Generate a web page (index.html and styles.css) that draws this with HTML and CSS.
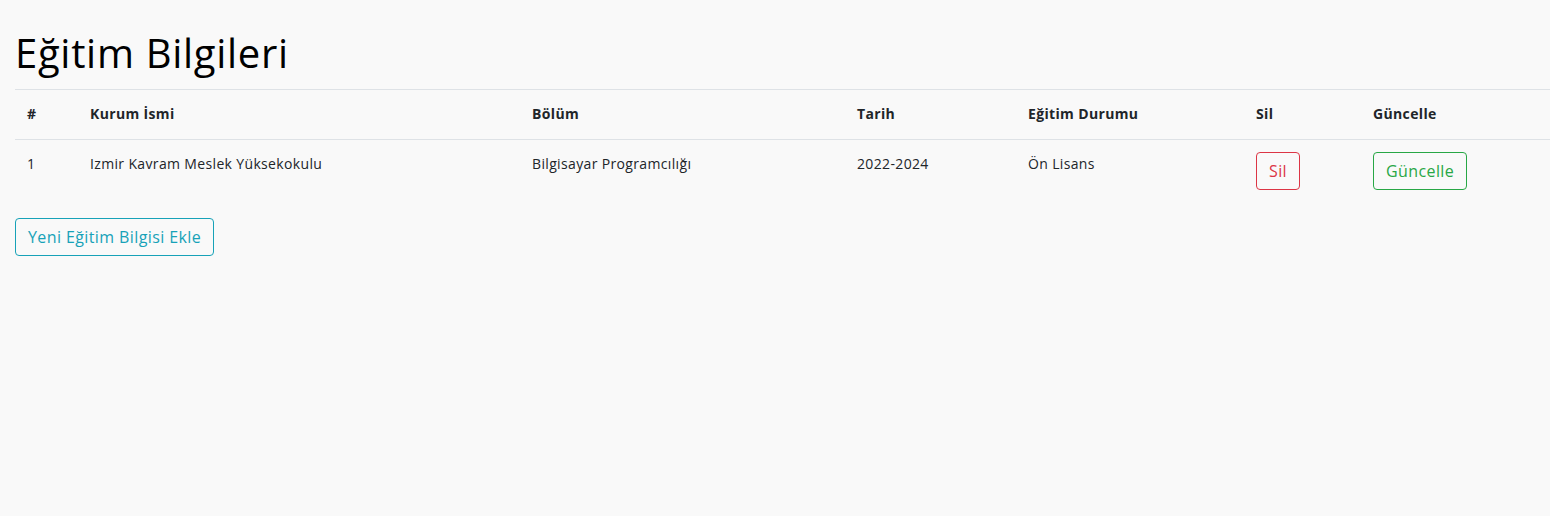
FILE: index.html
```html
<!DOCTYPE html>
<html lang="tr">
<head>
<meta charset="utf-8">
<title>Eğitim Bilgileri</title>
<link rel="stylesheet" href="styles.css">
</head>
<body>
<div class="container">
  <h1 class="title">Eğitim Bilgileri</h1>
  <table class="table">
    <colgroup>
      <col class="c1"><col class="c2"><col class="c3"><col class="c4"><col class="c5"><col class="c6"><col class="c7">
    </colgroup>
    <thead>
      <tr>
        <th>#</th>
        <th>Kurum İsmi</th>
        <th>Bölüm</th>
        <th>Tarih</th>
        <th>Eğitim Durumu</th>
        <th>Sil</th>
        <th>Güncelle</th>
      </tr>
    </thead>
    <tbody>
      <tr>
        <td>1</td>
        <td>Izmir Kavram Meslek Yüksekokulu</td>
        <td>Bilgisayar Programcılığı</td>
        <td>2022-2024</td>
        <td>Ön Lisans</td>
        <td><button class="btn btn-danger">Sil</button></td>
        <td><button class="btn btn-success">Güncelle</button></td>
      </tr>
    </tbody>
  </table>
  <button class="btn btn-info">Yeni Eğitim Bilgisi Ekle</button>
</div>
</body>
</html>
```

FILE: styles.css
```css
html, body {
  margin: 0;
  padding: 0;
  background: #f9f9f9;
}
body {
  font-family: "Open Sans", "DejaVu Sans", sans-serif;
  color: #212529;
  font-size: 14px;
  line-height: 24px;
  letter-spacing: 0.35px;
}
.container {
  padding: 0 0 0 15px;
}
.title {
  margin: 0;
  padding-top: 29px;
  height: 60px;
  font-size: 40px;
  line-height: 48px;
  font-weight: 400;
  letter-spacing: 0.7px;
  color: #000;
}
.table {
  width: 100%;
  border-collapse: collapse;
  table-layout: fixed;
  margin-bottom: 16px;
}
.c1 { width: 63px; }
.c2 { width: 442px; }
.c3 { width: 325px; }
.c4 { width: 171px; }
.c5 { width: 228px; }
.c6 { width: 117px; }
.table th {
  text-align: left;
  font-weight: 700;
  padding: 12px 12px 13px;
  border-top: 1px solid #dee2e6;
  border-bottom: 1px solid #dee2e6;
  vertical-align: top;
}
.table td {
  padding: 12px;
  vertical-align: top;
}
.btn {
  font-family: inherit;
  font-size: 16px;
  line-height: 24px;
  letter-spacing: 0.4px;
  padding: 6px 12px;
  background: transparent;
  border: 1px solid;
  border-radius: 4px;
  cursor: pointer;
  display: inline-block;
}
.btn-danger { color: #dc3545; border-color: #dc3545; }
.btn-success { color: #28a745; border-color: #28a745; }
.btn-info { color: #17a2b8; border-color: #17a2b8; }
```
